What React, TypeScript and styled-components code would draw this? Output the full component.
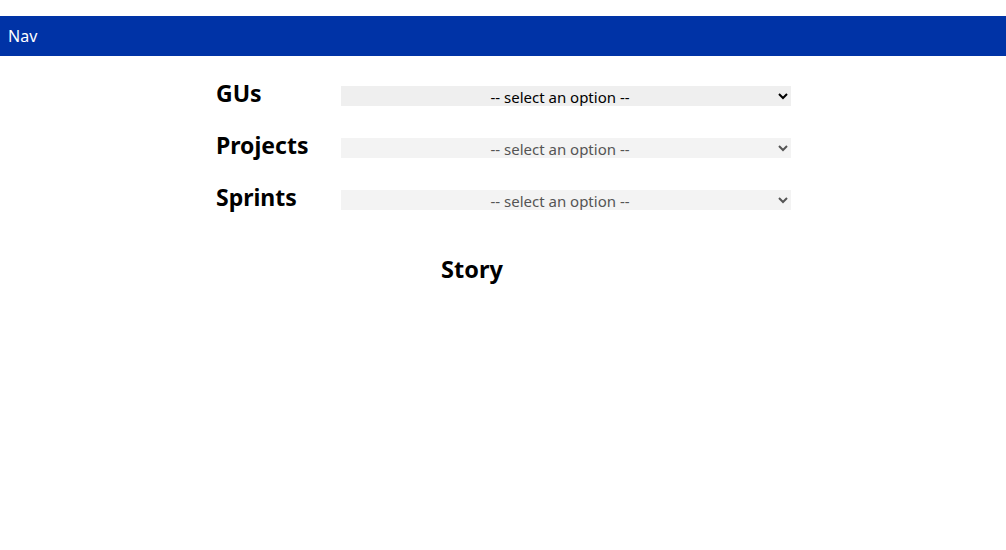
import styled, { createGlobalStyle } from 'styled-components';

const GlobalStyle = createGlobalStyle`
  body {
    margin: 0;
    padding-top: 16px;
    font-family: 'Noto Sans', 'Open Sans', sans-serif;
    background: #fff;
  }
`;

const fields = [
  { label: 'GUs', disabled: false },
  { label: 'Projects', disabled: true },
  { label: 'Sprints', disabled: true },
];

const App = () => {
  return (
    <>
      <GlobalStyle />
      <NavBar>Nav</NavBar>
      <Main>
        <Filters>
          {fields.map((f) => (
            <FilterRow key={f.label}>
              <FilterLabel>{f.label}</FilterLabel>
              <Select disabled={f.disabled} defaultValue="">
                <option value="" disabled>
                  -- select an option --
                </option>
              </Select>
            </FilterRow>
          ))}
        </Filters>
        <StoryTitle>Story</StoryTitle>
      </Main>
    </>
  );
};

export default App;

const NavBar = styled.nav`
  display: flex;
  align-items: center;
  height: 40px;
  padding: 0 8px;
  background: #0033a6;
  color: #fff;
  font-size: 16px;
`;

const Main = styled.main`
  width: 575px;
  margin: 0 auto;
  padding-left: 1px;
`;

const Filters = styled.div`
  display: flex;
  flex-direction: column;
  gap: 20px;
  padding-top: 27px;
`;

const FilterRow = styled.div`
  display: flex;
  align-items: flex-start;
  height: 32px;
`;

const FilterLabel = styled.h2`
  width: 125px;
  margin: 0;
  font-size: 23px;
  font-weight: 700;
  line-height: 20px;
  color: #000;
`;

const Select = styled.select`
  box-sizing: border-box;
  width: 450px;
  height: 20px;
  margin-top: 3px;
  padding: 0;
  border: none;
  border-radius: 0;
  outline: none;
  background: #efefef;
  color: #000;
  font-family: 'Noto Sans', 'Open Sans', sans-serif;
  font-size: 15px;
  text-align: center;
  text-align-last: center;

  &:disabled {
    background: #f3f3f3;
    color: #555;
    opacity: 1;
  }
`;

const StoryTitle = styled.h2`
  width: 512px;
  margin: 35px 0 0;
  font-size: 23.5px;
  font-weight: 700;
  line-height: 30px;
  text-align: center;
  color: #000;
`;
